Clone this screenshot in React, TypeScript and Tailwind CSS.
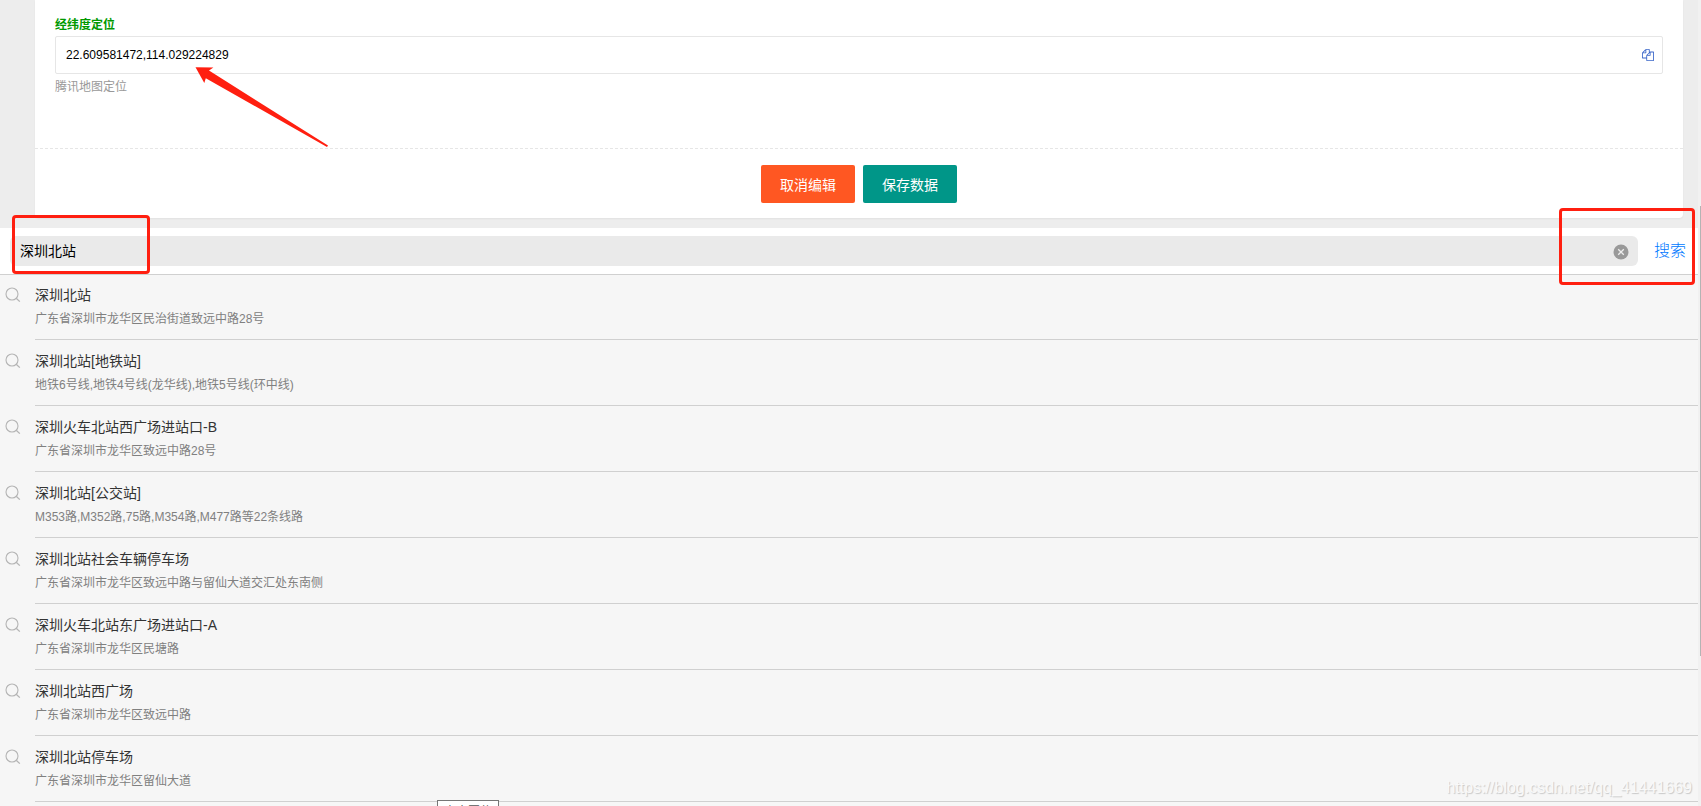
import React from 'react';

interface Place {
  title: string;
  address: string;
}

const places: Place[] = [
  { title: '深圳北站', address: '广东省深圳市龙华区民治街道致远中路28号' },
  { title: '深圳北站[地铁站]', address: '地铁6号线,地铁4号线(龙华线),地铁5号线(环中线)' },
  { title: '深圳火车北站西广场进站口-B', address: '广东省深圳市龙华区致远中路28号' },
  { title: '深圳北站[公交站]', address: 'M353路,M352路,75路,M354路,M477路等22条线路' },
  { title: '深圳北站社会车辆停车场', address: '广东省深圳市龙华区致远中路与留仙大道交汇处东南侧' },
  { title: '深圳火车北站东广场进站口-A', address: '广东省深圳市龙华区民塘路' },
  { title: '深圳北站西广场', address: '广东省深圳市龙华区致远中路' },
  { title: '深圳北站停车场', address: '广东省深圳市龙华区留仙大道' },
];

const CopyIcon: React.FC = () => (
  <svg className="h-3 w-3" viewBox="0 0 1792 1792" fill="#3b67c9">
    <path d="M1696 384q40 0 68 28t28 68v1216q0 40-28 68t-68 28h-960q-40 0-68-28t-28-68v-288h-544q-40 0-68-28t-28-68v-672q0-40 20-88t48-76l408-408q28-28 76-48t88-20h416q40 0 68 28t28 68v328q68-40 128-40h416zm-544 213l-299 299h299v-299zm-640-384l-299 299h299v-299zm196 647l316-316v-416h-384v416q0 40-28 68t-68 28h-416v640h512v-256q0-40 20-88t48-76zm956 804v-1152h-384v416q0 40-28 68t-68 28h-416v640h896z" />
  </svg>
);

const SearchIcon: React.FC = () => (
  <svg className="h-4 w-4 shrink-0" viewBox="0 0 16 16" fill="none" stroke="#b4b4b4">
    <circle cx="7" cy="7" r="6" strokeWidth="1.1" />
    <path d="M11.2 11.2L14.8 14.6" strokeWidth="1.3" />
  </svg>
);

const ClearIcon: React.FC = () => (
  <svg className="h-4 w-4" viewBox="0 0 16 16">
    <circle cx="8" cy="8" r="7.5" fill="#999999" />
    <path d="M5.2 5.2l5.6 5.6M10.8 5.2l-5.6 5.6" stroke="#ededed" strokeWidth="1.3" />
  </svg>
);

// Edit form with the coordinate field and its two actions
const LocationForm: React.FC = () => (
  <form className="mr-[15px] ml-[35px] rounded-b bg-white shadow-xs" onSubmit={(e) => e.preventDefault()}>
    <div className="px-5 pt-[17px] pb-[53px]">
      <label htmlFor="location" className="block text-xs leading-4 font-bold text-[#009900]">
        经纬度定位
      </label>
      <div className="mt-[3px] flex h-[38px] items-center rounded-xs border border-[#e6e6e6] pr-2 pl-[10px]">
        <input
          id="location"
          type="text"
          defaultValue="22.609581472,114.029224829"
          className="min-w-0 flex-1 text-xs text-black outline-none"
        />
        <button type="button" aria-label="选择位置" className="block">
          <CopyIcon />
        </button>
      </div>
      <p className="mt-[5px] text-xs leading-4 text-[#999999]">腾讯地图定位</p>
    </div>
    <div className="flex justify-center gap-2 border-t border-dashed border-[#e6e6e6] pt-4 pb-[15px]">
      <button type="button" className="h-[38px] rounded-xs bg-[#ff5722] px-[19px] pt-0.5 text-sm text-white">
        取消编辑
      </button>
      <button type="submit" className="h-[38px] rounded-xs bg-[#009688] px-[19px] pt-0.5 text-sm text-white">
        保存数据
      </button>
    </div>
  </form>
);

const SearchBar: React.FC = () => (
  <form
    role="search"
    className="flex h-[47px] items-center border-b border-[#d0d0d0] bg-white pr-3 pl-[10px]"
    onSubmit={(e) => e.preventDefault()}
  >
    <div className="flex h-[30px] flex-1 items-center rounded-md bg-[#eaeaea] pr-[9px] pl-[10px]">
      <input
        type="text"
        aria-label="搜索地点"
        defaultValue="深圳北站"
        className="min-w-0 flex-1 text-sm text-black outline-none"
      />
      <button type="button" aria-label="清空" className="block pt-px">
        <ClearIcon />
      </button>
    </div>
    <button type="submit" className="ml-4 text-base font-light text-[#0079ff]">
      搜索
    </button>
  </form>
);

const PlaceItem: React.FC<Place> = ({ title, address }) => (
  <li className="flex gap-[14px] pl-[5px]">
    <div className="pt-[13px]">
      <SearchIcon />
    </div>
    <div className="h-[66px] flex-1 border-b border-[#d0d0d0] pt-[11px]">
      <p className="text-sm leading-5 text-[#333333]">{title}</p>
      <p className="mt-1 text-xs leading-5 text-[#808080]">{address}</p>
    </div>
  </li>
);

const App: React.FC = () => {
  return (
    <div className="relative flex h-screen overflow-hidden bg-[#f6f6f6] font-['Liberation_Sans','Noto_Sans_CJK_SC',sans-serif]">
      <main className="min-w-0 flex-1">
        <div className="bg-[#ededed] pb-[10px]">
          <LocationForm />
        </div>
        <SearchBar />
        <ul className="-mt-px">
          {places.map((place) => (
            <PlaceItem key={place.title} {...place} />
          ))}
        </ul>
      </main>

      {/* scrollbar */}
      <div className="flex w-[3px] justify-end bg-[#f1f1f1] pt-[206px]">
        <div className="h-[450px] w-px bg-[#b4b4b4]" />
      </div>

      {/* annotations */}
      <svg className="pointer-events-none absolute top-[66px] left-[194px] h-[84px] w-[136px]" viewBox="194 66 136 84" fill="#ff1f10">
        <path d="M195.5 67.2L213.4 67.4L209 70.6L328 145.6L327 147L205.8 78.2L204.3 83Z" />
      </svg>
      <div className="pointer-events-none absolute top-[215px] left-[12px] h-[59px] w-[138px] rounded border-3 border-[#ff1f10]" />
      <div className="pointer-events-none absolute top-[208px] right-[6px] h-[77px] w-[136px] rounded border-3 border-[#ff1f10]" />

      <div className="absolute top-[800px] left-[437px] border border-[#767676] bg-white px-1.5 pt-[3px] text-xs leading-4 whitespace-nowrap text-[#575757]">
        点击圆位
      </div>
      <div className="pointer-events-none absolute right-[9px] bottom-2 text-base leading-5 text-[#f9f9f9] [text-shadow:1px_1px_1px_#c8c8c8]">
        https://blog.csdn.net/qq_41441669
      </div>
    </div>
  );
};

export default App;
